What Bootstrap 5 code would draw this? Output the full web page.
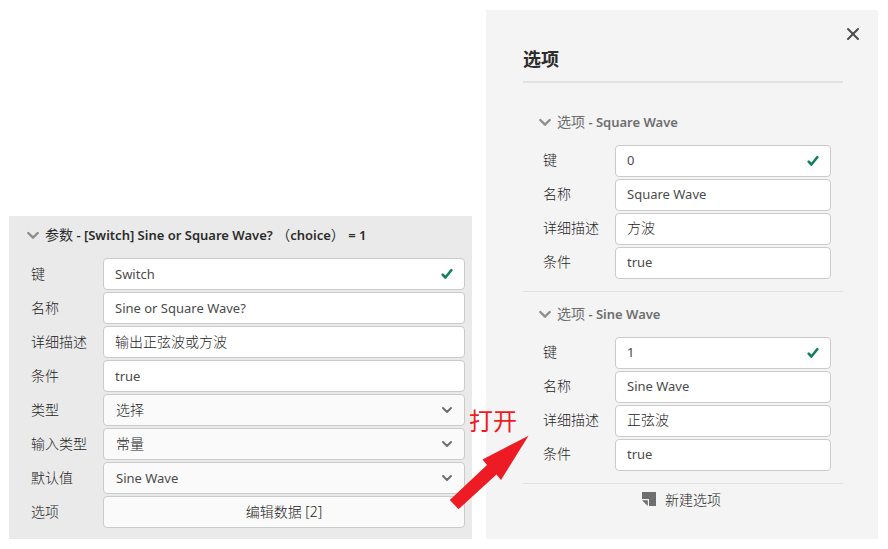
<!DOCTYPE html>
<html lang="zh-CN">
<head>
<meta charset="utf-8">
<meta name="viewport" content="width=device-width, initial-scale=1">
<title>选项</title>
<link rel="stylesheet" href="https://cdn.jsdelivr.net/npm/bootstrap@5.3.0/dist/css/bootstrap.min.css">
<style>
  body { font-family: "Noto Sans", "Noto Sans CJK SC", sans-serif; font-size: 14px; line-height: 20px; color: #4b4b4b; background: #fff; }
  .workspace { display: grid; grid-template-columns: minmax(0, 463fr) minmax(0, 392fr); padding: 10px 10px 10px 9px; gap: 14px; }
  .param-panel { background: #eaeaea; padding: 0 7px 11px 18px; }
  .option-panel { background: #f4f4f4; padding: 12px 35px 25px 37px; }
  .section-toggle { height: 38px; margin-bottom: 4px; gap: 6px; font-size: 13px; font-weight: 600; color: #2c2c2c; white-space: nowrap; }
  .section-toggle .han { font-size: 14px; font-weight: 400; }
  .option-panel .section-toggle { color: #6e6e6e; }
  .fields { display: grid; gap: 2px; padding-left: 4px; }
  .field-label { width: 72px; flex: none; font-weight: 300; color: #242424; }
  .field-box { height: 32px; padding: 0 11px; font-size: 14px; line-height: 20px; font-weight: 300; color: #242424; border: 1px solid #cacaca; border-radius: 4px; background: #fff; }
  input.field-box { padding-bottom: 2px; }
  .field-box.latin { font-size: 13px; font-weight: 400; color: #4b4b4b; padding-bottom: 0; }
  .option-panel .field-box { padding-bottom: 4px; }
  .option-panel .field-box.latin, .option-panel .field-label { padding-bottom: 2px; }
  select.field-box, button.field-box { background: #fafafa; }
  select.field-box { padding-left: 12px; }
  .field-icon { position: absolute; right: 12px; top: 10px; pointer-events: none; }
  .close-row { margin-right: -22px; }
  .close-btn { width: 24px; height: 24px; }
  .panel-title { font-size: 18px; line-height: 26px; font-weight: 700; color: #2c2c2c; padding-bottom: 9px; border-bottom: 2px solid #e1e1e1; margin-bottom: 17px; }
  .option-group { padding: 3px 12px 12px 16px; border-bottom: 1px solid #e1e1e1; }
  .add-row { padding-right: 3px; }
  .add-btn { height: 30px; gap: 9px; font-size: 14px; font-weight: 300; color: #242424; }
  .callout-text { position: absolute; right: -45px; bottom: 102px; font-size: 24px; line-height: 32px; color: #ed1c24; white-space: nowrap; z-index: 2; }
  .callout-arrow { position: absolute; right: -57px; bottom: 29px; z-index: 2; }
</style>
</head>
<body>
<main class="workspace align-items-end">

  <section class="param-panel position-relative">
    <button type="button" class="section-toggle btn border-0 p-0 d-flex align-items-center ms-0">
      <svg width="12" height="9" viewBox="0 0 12 9" fill="none" stroke="#8e8e8e" stroke-width="2.4" stroke-linecap="round" stroke-linejoin="round"><path d="M1.3 2 6 6.7 10.7 2"/></svg>
      <span><span class="han">参数</span> - [Switch] Sine or Square Wave? <span class="han">（</span>choice<span class="han">）</span> = 1</span>
    </button>
    <div class="fields">
      <div class="d-flex align-items-center"><label class="field-label" for="p-key">键</label>
        <div class="position-relative flex-fill"><input id="p-key" class="field-box latin form-control" value="Switch">
          <svg class="field-icon" width="12" height="12" viewBox="0 0 12 12" fill="none" stroke="#12805c" stroke-width="2.6" stroke-linecap="round" stroke-linejoin="round"><path d="M1.7 6.6 4.4 9.5 10.3 2.2"/></svg></div></div>
      <div class="d-flex align-items-center"><label class="field-label" for="p-name">名称</label>
        <input id="p-name" class="field-box latin form-control" value="Sine or Square Wave?"></div>
      <div class="d-flex align-items-center"><label class="field-label" for="p-desc">详细描述</label>
        <input id="p-desc" class="field-box form-control" value="输出正弦波或方波"></div>
      <div class="d-flex align-items-center"><label class="field-label" for="p-cond">条件</label>
        <input id="p-cond" class="field-box latin form-control" value="true"></div>
      <div class="d-flex align-items-center"><label class="field-label" for="p-type">类型</label>
        <div class="position-relative flex-fill"><select id="p-type" class="field-box form-select"><option>选择</option></select>
          <svg class="field-icon" width="12" height="12" viewBox="0 0 12 12" fill="none" stroke="#6e6e6e" stroke-width="2" stroke-linecap="round" stroke-linejoin="round"><path d="M2 4 6 8 10 4"/></svg></div></div>
      <div class="d-flex align-items-center"><label class="field-label" for="p-input">输入类型</label>
        <div class="position-relative flex-fill"><select id="p-input" class="field-box form-select"><option>常量</option></select>
          <svg class="field-icon" width="12" height="12" viewBox="0 0 12 12" fill="none" stroke="#6e6e6e" stroke-width="2" stroke-linecap="round" stroke-linejoin="round"><path d="M2 4 6 8 10 4"/></svg></div></div>
      <div class="d-flex align-items-center"><label class="field-label" for="p-default">默认值</label>
        <div class="position-relative flex-fill"><select id="p-default" class="field-box latin form-select"><option>Sine Wave</option></select>
          <svg class="field-icon" width="12" height="12" viewBox="0 0 12 12" fill="none" stroke="#6e6e6e" stroke-width="2" stroke-linecap="round" stroke-linejoin="round"><path d="M2 4 6 8 10 4"/></svg></div></div>
      <div class="d-flex align-items-center"><label class="field-label" for="p-options">选项</label>
        <button id="p-options" type="button" class="field-box btn flex-fill">编辑数据 [2]</button></div>
    </div>
    <div class="callout-text">打开</div>
    <svg class="callout-arrow" width="80" height="75" viewBox="0 0 80 75"><path fill="#ed1c24" d="M79.5 .8 33.5 24.5 38 30 .8 65 9.5 74.3 47.5 39.5 52 45Z"/></svg>
  </section>

  <section class="option-panel">
    <div class="close-row d-flex justify-content-end">
      <button type="button" class="close-btn btn border-0 p-0 d-flex align-items-center justify-content-center" aria-label="关闭">
        <svg width="14" height="14" viewBox="0 0 14 14" fill="none" stroke="#4b4b4b" stroke-width="2" stroke-linecap="round"><path d="M2 2 12 12M12 2 2 12"/></svg>
      </button>
    </div>
    <h1 class="panel-title">选项</h1>

    <div class="option-group">
      <button type="button" class="section-toggle btn border-0 p-0 d-flex align-items-center">
        <svg width="12" height="9" viewBox="0 0 12 9" fill="none" stroke="#8e8e8e" stroke-width="2.4" stroke-linecap="round" stroke-linejoin="round"><path d="M1.3 2 6 6.7 10.7 2"/></svg>
        <span><span class="han">选项</span> - Square Wave</span>
      </button>
      <div class="fields">
        <div class="d-flex align-items-center"><label class="field-label" for="a-key">键</label>
          <div class="position-relative flex-fill"><input id="a-key" class="field-box latin form-control" value="0">
            <svg class="field-icon" width="12" height="12" viewBox="0 0 12 12" fill="none" stroke="#12805c" stroke-width="2.6" stroke-linecap="round" stroke-linejoin="round"><path d="M1.7 6.6 4.4 9.5 10.3 2.2"/></svg></div></div>
        <div class="d-flex align-items-center"><label class="field-label" for="a-name">名称</label>
          <input id="a-name" class="field-box latin form-control" value="Square Wave"></div>
        <div class="d-flex align-items-center"><label class="field-label" for="a-desc">详细描述</label>
          <input id="a-desc" class="field-box form-control" value="方波"></div>
        <div class="d-flex align-items-center"><label class="field-label" for="a-cond">条件</label>
          <input id="a-cond" class="field-box latin form-control" value="true"></div>
      </div>
    </div>

    <div class="option-group">
      <button type="button" class="section-toggle btn border-0 p-0 d-flex align-items-center">
        <svg width="12" height="9" viewBox="0 0 12 9" fill="none" stroke="#8e8e8e" stroke-width="2.4" stroke-linecap="round" stroke-linejoin="round"><path d="M1.3 2 6 6.7 10.7 2"/></svg>
        <span><span class="han">选项</span> - Sine Wave</span>
      </button>
      <div class="fields">
        <div class="d-flex align-items-center"><label class="field-label" for="b-key">键</label>
          <div class="position-relative flex-fill"><input id="b-key" class="field-box latin form-control" value="1">
            <svg class="field-icon" width="12" height="12" viewBox="0 0 12 12" fill="none" stroke="#12805c" stroke-width="2.6" stroke-linecap="round" stroke-linejoin="round"><path d="M1.7 6.6 4.4 9.5 10.3 2.2"/></svg></div></div>
        <div class="d-flex align-items-center"><label class="field-label" for="b-name">名称</label>
          <input id="b-name" class="field-box latin form-control" value="Sine Wave"></div>
        <div class="d-flex align-items-center"><label class="field-label" for="b-desc">详细描述</label>
          <input id="b-desc" class="field-box form-control" value="正弦波"></div>
        <div class="d-flex align-items-center"><label class="field-label" for="b-cond">条件</label>
          <input id="b-cond" class="field-box latin form-control" value="true"></div>
      </div>
    </div>

    <div class="add-row d-flex justify-content-center">
      <button type="button" class="add-btn btn border-0 p-0 d-flex align-items-center">
        <svg width="14" height="14" viewBox="0 0 14 14" fill="#6e6e6e"><path d="M0 0H14V14H7V7H0Z"/><path d="M0 8.2H5.8V14Z"/></svg>
        <span>新建选项</span>
      </button>
    </div>
  </section>

</main>
<script src="https://cdn.jsdelivr.net/npm/bootstrap@5.3.0/dist/js/bootstrap.bundle.min.js"></script>
</body>
</html>
